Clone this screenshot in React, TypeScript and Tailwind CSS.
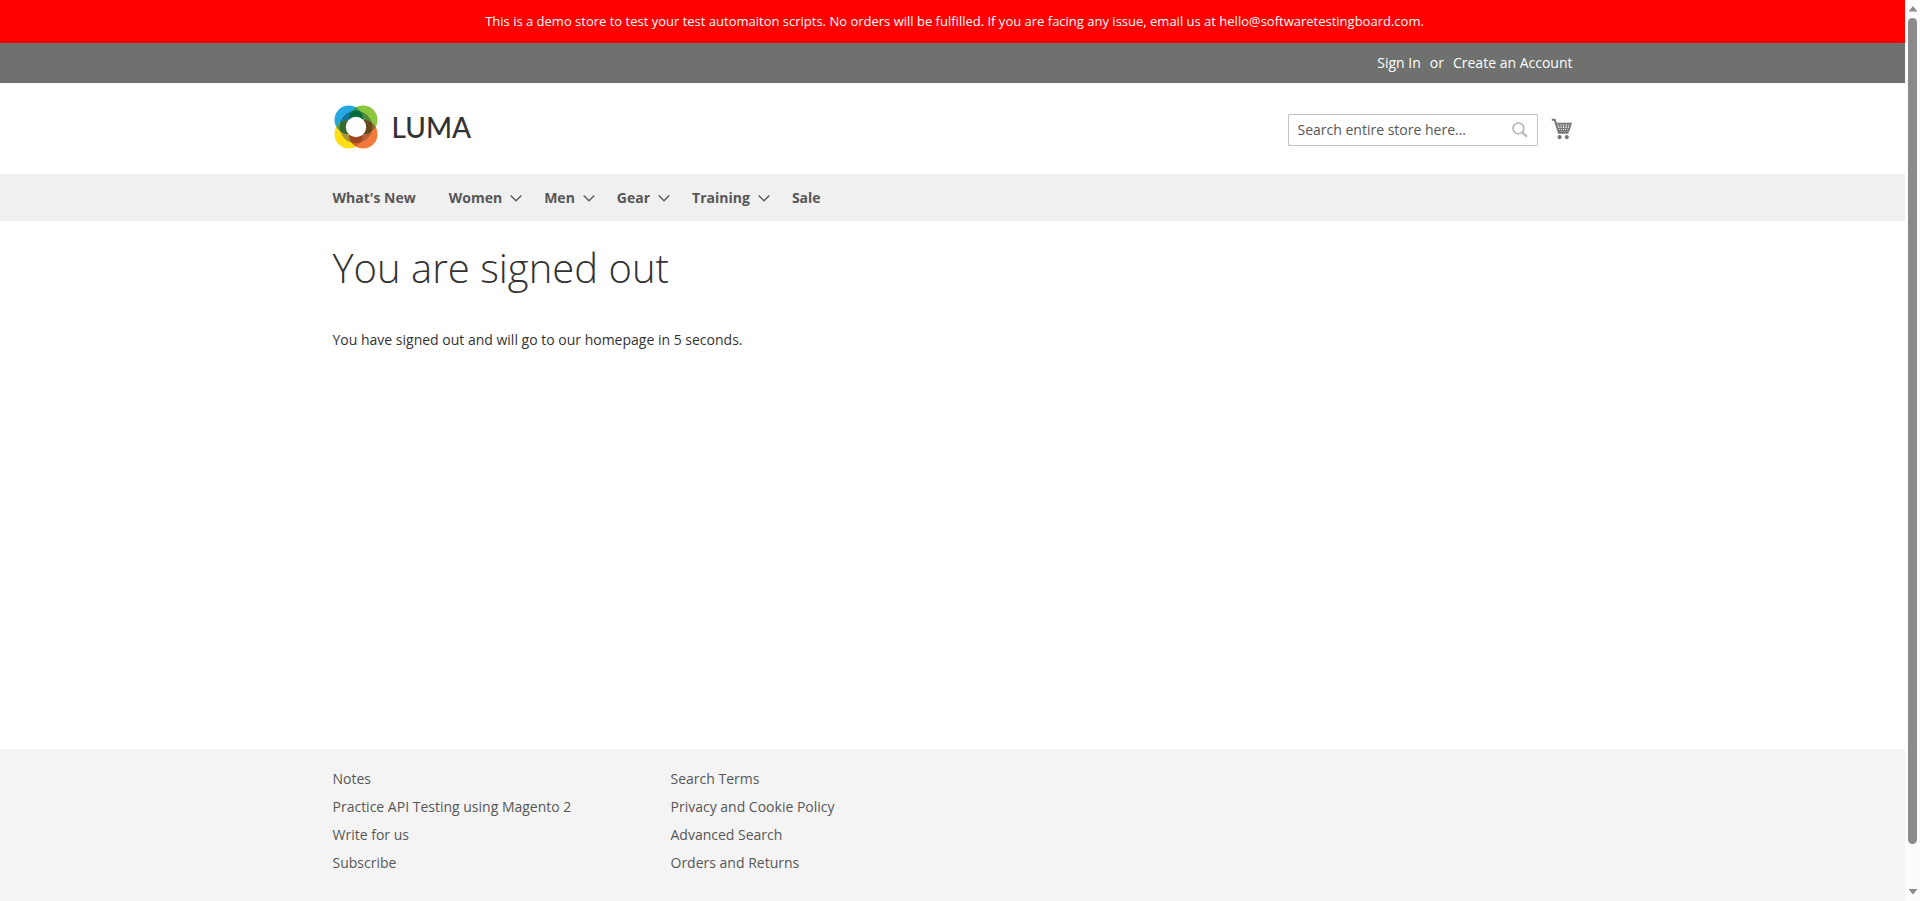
import type { ReactNode } from 'react';

const menu = [
  { label: "What's New", children: false },
  { label: 'Women', children: true },
  { label: 'Men', children: true },
  { label: 'Gear', children: true },
  { label: 'Training', children: true },
  { label: 'Sale', children: false },
];

const footerColumns = [
  ['Notes', 'Practice API Testing using Magento 2', 'Write for us', 'Subscribe'],
  ['Search Terms', 'Privacy and Cookie Policy', 'Advanced Search', 'Orders and Returns'],
];

function Container({ children, className = '' }: { children: ReactNode; className?: string }) {
  return <div className={`mx-auto w-full max-w-[1280px] px-5 ${className}`}>{children}</div>;
}

function LogoMark() {
  return (
    <svg width="45" height="44" viewBox="-1 0 45 44" aria-hidden="true">
      <defs>
        <clipPath id="tl"><circle cx="14.8" cy="14.8" r="14.3" /></clipPath>
        <clipPath id="tr"><circle cx="29.2" cy="14.8" r="14.3" /></clipPath>
        <clipPath id="bl"><circle cx="14.8" cy="29.2" r="14.3" /></clipPath>
        <clipPath id="br"><circle cx="29.2" cy="29.2" r="14.3" /></clipPath>
      </defs>
      <circle cx="14.8" cy="14.8" r="14.3" fill="#27a8e0" />
      <circle cx="29.2" cy="14.8" r="14.3" fill="#8cc63f" />
      <circle cx="14.8" cy="29.2" r="14.3" fill="#ffde17" />
      <circle cx="29.2" cy="29.2" r="14.3" fill="#f47b3b" />
      <g clipPath="url(#tl)"><circle cx="29.2" cy="14.8" r="14.3" fill="#27965f" /></g>
      <g clipPath="url(#bl)"><circle cx="14.8" cy="14.8" r="14.3" fill="#5a9a3c" /></g>
      <g clipPath="url(#br)"><circle cx="29.2" cy="14.8" r="14.3" fill="#8c6a2c" /></g>
      <g clipPath="url(#bl)"><circle cx="29.2" cy="29.2" r="14.3" fill="#d5662c" /></g>
      <g clipPath="url(#tl)"><circle cx="22" cy="22" r="16.3" fill="#0f759f" /></g>
      <g clipPath="url(#tr)"><circle cx="22" cy="22" r="16.3" fill="#4f8c3a" /></g>
      <g clipPath="url(#bl)"><circle cx="22" cy="22" r="16.3" fill="#ab9433" /></g>
      <g clipPath="url(#br)"><circle cx="22" cy="22" r="16.3" fill="#b66235" /></g>
      <g clipPath="url(#tl)">
        <g clipPath="url(#tr)"><circle cx="22" cy="22" r="16.3" fill="#006b3a" /></g>
        <g clipPath="url(#bl)"><circle cx="22" cy="22" r="16.3" fill="#356b2e" /></g>
      </g>
      <g clipPath="url(#br)">
        <g clipPath="url(#tr)"><circle cx="22" cy="22" r="16.3" fill="#63481c" /></g>
        <g clipPath="url(#bl)"><circle cx="22" cy="22" r="16.3" fill="#a04622" /></g>
      </g>
      <circle cx="22" cy="22" r="10.2" fill="#fff" />
    </svg>
  );
}

function ChevronDown() {
  return (
    <svg width="12" height="8" viewBox="0 0 12 8" fill="none" stroke="#575757" strokeWidth="1.3" aria-hidden="true">
      <path d="M.7 1.5 6 6.8 11.3 1.5" />
    </svg>
  );
}

function SearchIcon() {
  return (
    <svg width="16" height="16" viewBox="0 0 16 16" fill="none" stroke="#b3b3b3" aria-hidden="true">
      <circle cx="6.4" cy="6.4" r="5.4" strokeWidth="1.6" />
      <path d="m10.4 10.4 4.6 4.3" strokeWidth="2" />
    </svg>
  );
}

function CartIcon() {
  return (
    <svg width="22" height="24" viewBox="0 0 22 24" fill="none" stroke="#757575" aria-hidden="true">
      <path d="M.8 1.8h2.9l4.2 13h9.6" strokeWidth="2" />
      <path d="M4.6 5.6h15.3l-2.3 7.3H7" strokeWidth="1.7" />
      <path d="M5.3 8h13.6M6 10.5h12.2M8.3 5.6l1.3 7.3M11 5.6l.6 7.3M14 5.6l-.4 7.3M17 5.6l-1.3 7.3" strokeWidth="1.2" />
      <circle cx="8.6" cy="19.1" r="2.1" fill="#757575" stroke="none" />
      <circle cx="15.8" cy="19.1" r="2.1" fill="#757575" stroke="none" />
    </svg>
  );
}

function ScrollBar() {
  return (
    <div className="flex w-[15px] shrink-0 flex-col items-center bg-[#fcfcfc] py-1.5" aria-hidden="true">
      <svg width="10" height="6" viewBox="0 0 10 6" fill="#8b8b8b"><path d="M5 0l4.5 5.4h-9z" /></svg>
      <div className="mt-1.5 mb-[45px] w-[9px] grow rounded-full bg-[#8b8b8b]" />
      <svg width="10" height="6" viewBox="0 0 10 6" fill="#8b8b8b"><path d="M5 5.4L.5 0h9z" /></svg>
    </div>
  );
}

export default function App() {
  return (
    <div className="flex h-screen overflow-hidden bg-white font-['Open_Sans',sans-serif] text-sm text-[#333]">
      <div className="flex min-w-0 grow flex-col">
        <div className="bg-[#ff0000] py-3 pr-5 pl-6 text-center text-[13px] leading-[19px] text-white">
          This is a demo store to test your test automaiton scripts. No orders will be fulfilled. If you are facing any issue, email us at hello@softwaretestingboard.com.
        </div>

        <header>
          <div className="bg-[#6e716e] text-white">
            <Container className="flex justify-end py-2.5 leading-5">
              <a href="#signin">Sign In</a>
              <span className="mx-[9px]">or</span>
              <a href="#create">Create an Account</a>
            </Container>
          </div>
          <Container className="flex items-start justify-between pt-[22px] pb-[25px]">
            <a href="#home" aria-label="Luma" className="flex items-center gap-3.5 font-['Lato',sans-serif] text-[28px] leading-[44px] font-medium text-[#333]">
              <LogoMark />
              <span>LUMA</span>
            </a>
            <div className="mt-[9px] flex items-center gap-[13px]">
              <form className="flex h-8 w-[250px] items-center rounded-[1px] border border-[#c2c2c2] px-[9px]">
                <input
                  type="text"
                  aria-label="Search"
                  placeholder="Search entire store here..."
                  className="min-w-0 grow bg-transparent outline-none placeholder:text-[#575757]"
                />
                <button type="button" aria-label="Search">
                  <SearchIcon />
                </button>
              </form>
              <a href="#cart" aria-label="My Cart">
                <CartIcon />
              </a>
            </div>
          </Container>
        </header>

        <nav className="bg-[#f0f0f0]">
          <Container className="flex py-3.5 leading-[19px] font-bold text-[#575757]">
            {menu.map((item) => (
              <a
                key={item.label}
                href="#menu"
                className={item.children ? 'mr-[22px] flex items-center gap-2' : 'mr-[33px] flex items-center'}
              >
                {item.label}
                {item.children && <ChevronDown />}
              </a>
            ))}
          </Container>
        </nav>

        <main className="grow">
          <Container>
            <h1 className="mt-[19px] text-[40px] leading-[55px] font-light">You are signed out</h1>
            <p className="mt-[35px] leading-5">You have signed out and will go to our homepage in 5 seconds.</p>
          </Container>
        </main>

        <footer className="bg-[#f4f4f4]">
          <Container className="flex pt-5 pb-7">
            {footerColumns.map((links) => (
              <ul key={links[0]} className="w-[338px] space-y-2 leading-5">
                {links.map((link) => (
                  <li key={link}>
                    <a href="#footer" className="text-[#575757]">{link}</a>
                  </li>
                ))}
              </ul>
            ))}
          </Container>
        </footer>
      </div>
      <ScrollBar />
    </div>
  );
}
